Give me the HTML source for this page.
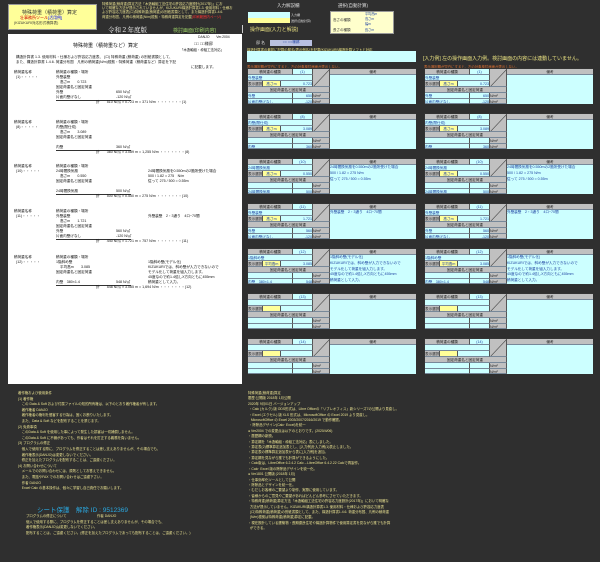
<!DOCTYPE html>
<html><head><meta charset="utf-8">
<style>
*{margin:0;padding:0;box-sizing:border-box}
body{width:600px;height:562px;background:#2f2f2f;position:relative;overflow:hidden;font-family:"Liberation Sans","Noto Sans CJK JP",sans-serif;}
.a{position:absolute;white-space:nowrap}
.t{font-size:4px;line-height:4.6px}
.c{background:#ccffff}
.g{background:#c0c0c0}
.y{background:#ffff99}
.blk{position:absolute;width:169px;height:36px;background:#ccffff;border:1px solid #333}
.blk div{position:absolute;font-size:3.6px;line-height:6px;color:#1b3fa0;white-space:nowrap;overflow:hidden;border-right:1px solid #555;border-bottom:1px solid #789}
.paper{position:absolute;left:8px;top:34px;width:234px;height:350px;background:#fff}
.paper .a{font-size:4px;line-height:4.5px;color:#111}
.yt{color:#e8e090}
</style></head><body>

<div class="a y" style="left:8px;top:4px;width:89px;height:26px;border:1px solid #999;"></div>
<div class="a" style="left:22px;top:9px;font-size:5px;color:#333">特殊荷重（積荷重）算定</div>
<div class="a" style="left:20px;top:15px;font-size:4px;color:#c00">壮事務所ツール<span style="color:#00f">[活用例]</span></div>
<div class="a" style="left:14px;top:21px;font-size:3.6px;color:#333">(KIZUKURI対応形式積算表)</div>

<div class="a t yt" style="left:102px;top:2px;font-size:3.4px;line-height:4.2px">特殊荷重(積荷重)算定方法「木造軸組工法住宅の許容応力度設計(2017年)」にお<br>いて明確な方法が提示されていませんが、KIZUKURI構造計算書1.3. 使用材料・仕様お<br>よび許容応力度表(ロ)特殊荷重(積荷重)の別紙書類として、また構造計算書1.4.6.<br>荷重分布図、凡例の積荷重(N/m)根拠・特殊荷重算定を記載<span style="color:#f33">(印刷範囲内ページ)</span></div>
<div class="a" style="left:108px;top:25px;font-size:6.5px;color:#fff;font-family:'Liberation Serif','Noto Serif CJK SC',serif">令和２年度版</div>
<div class="a" style="left:173px;top:27px;font-size:5px;color:#9c6">検討画面(印刷内容)</div>
<div class="a" style="left:242px;top:25px;width:1px;height:8px;background:#ccc"></div>

<div class="a" style="left:277px;top:3px;font-size:4.5px;color:#ddd">入力解説欄</div>
<div class="a c" style="left:248px;top:12px;width:42px;height:6px"></div>
<div class="a y" style="left:248px;top:18px;width:42px;height:5px"></div>
<div class="a" style="left:291px;top:12px;font-size:3px;color:#ddd;line-height:6px">入力欄<br>選択(自動計算)</div>
<div class="a" style="left:250px;top:26px;font-size:5px;color:#e8e080">操作画面(入力と解説)</div>
<div class="a" style="left:338px;top:3px;font-size:4.5px;color:#ddd">選択(自動計算)</div>
<div class="a" style="left:330px;top:11px;width:64px;height:23px;background:#ffffcc;border:1px solid #999"></div>
<div class="a" style="left:333px;top:15px;font-size:3.5px;color:#333;line-height:10px">高さの種類<br>長さの種類</div>
<div class="a" style="left:365px;top:12px;font-size:3.2px;color:#1b3fa0;line-height:5.2px">平均高m<br>高さm<br>幅m<br>長さm</div>

<div class="a" style="left:256px;top:40px;font-size:4px;color:#ddd">邸 名</div>
<div class="a" style="left:270px;top:40px;width:42px;height:6px;background:#b8c0e0;font-size:3.6px;color:#1b3fa0;text-align:center">○○ ○○様邸</div>
<div class="a" style="left:247px;top:47px;font-size:3.4px;color:#e8e080">構造計算書の最初に記載の邸名(表示例名)を記載(KIZUKURI)構造計算ソフトと対応</div>
<div class="a c" style="left:247px;top:51px;width:169px;height:11px"></div>
<div class="a" style="left:423px;top:55px;font-size:5px;color:#e8e080">[入力例] 左の操作画面入力例。検討画面の内容には連動していません。</div>
<div class="a" style="left:247px;top:64px;font-size:3.4px;color:#e07030">表示選択欄が空白にすると、左の対象検討画面が表示しない。</div>
<div class="a" style="left:424px;top:64px;font-size:3.4px;color:#e07030">表示選択欄が空白にすると、左の対象検討画面が表示しない。</div>

<div class="paper" id="paper"></div>
<div id="blocks"></div>

<div class="a t yt" style="left:18px;top:391px;font-size:3.4px;line-height:5.6px">著作権および使用条件<br>(1) 著作権<br>&nbsp;&nbsp;&nbsp;&nbsp;この Data &amp; Soft および付属ファイルの知的所有権は、以下のとおり著作権者が有します。<br>&nbsp;&nbsp;&nbsp;&nbsp;著作権者 DANJO<br>&nbsp;&nbsp;&nbsp;&nbsp;著作権者の権利を侵害する行為は、固くお断りいたします。<br>&nbsp;&nbsp;&nbsp;&nbsp;また、Data &amp; Soft などを配布することを禁じます。<br>(2) 免責事項<br>&nbsp;&nbsp;&nbsp;&nbsp;このData &amp; Soft を使用した事によって発生した損害は一切補償しません。<br>&nbsp;&nbsp;&nbsp;&nbsp;このData &amp; Soft に不備があっても、作者はそれを訂正する義務を負いません。<br>(3) プログラムの修正<br>&nbsp;&nbsp;&nbsp;&nbsp;個人で使用する際に、プログラムを修正することは差し支えありませんが、その場合でも、<br>&nbsp;&nbsp;&nbsp;&nbsp;著作権表示(DANJO)は変更しないでください。<br>&nbsp;&nbsp;&nbsp;&nbsp;修正を加えたプログラムを配布することは、ご遠慮ください。<br>(4) お問い合わせについて<br>&nbsp;&nbsp;&nbsp;&nbsp;メールでのお問い合わせには、原則としてお答えできません。<br>&nbsp;&nbsp;&nbsp;&nbsp;また、電話やFAX でのお問い合わせはご遠慮下さい。<br>&nbsp;&nbsp;&nbsp;&nbsp;作者 DANJO<br>&nbsp;&nbsp;&nbsp;&nbsp;Excel·Calc の基本操作は、個々に学習し自己責任でお願いします。</div>
<div class="a" style="left:37px;top:504px;font-size:6.5px;color:#2aa8e0">シート保護　解除 ID : 9512369</div>
<div class="a t yt" style="left:26px;top:514px;font-size:3.4px;line-height:5.6px">プログラムの修正について　　　　　　　　　作者 DANJO<br>個人で使用する際に、プログラムを修正することは差し支えありませんが、その場合でも、<br>著作権表示(DANJO)は変更しないでください。<br>配布することは、ご遠慮ください。(修正を加えたプログラムであっても配布することは、ご遠慮ください。)</div>

<div class="a t yt" style="left:248px;top:391px;font-size:3.4px;line-height:5.4px">特殊荷重(積荷重)算定<br>履歴:公開版 2018年 1月公開<br>2020年 9月01日 バージョンアップ<br>&nbsp;・Calc (カルク) 版 ODS形式は、Libre Officeの「リブレオフィス」新シリーズ7の公開より見直し。<br>&nbsp;・Excel (エクセル) 版 XLS 形式は、MicrosoftOffice の Excel 2019 より見直し。<br>&nbsp;&nbsp;&nbsp;MicrosoftOffice の Excel 2003/2007/2016/2019 で動作確認。<br>&nbsp;・除除品デザイン(Calc· Excel)を統一<br>● Ver2004 での変更点は以下のとおりです。(2020/4/06)<br>・履歴欄の新設。<br>・算定欄を「木造軸組・枠組工法対応」表にしました。<br>・算定表(2)標準算定追加表とし、[入力例]を入力例(1)表止しました。<br>・算定表の標準算定追加表から表に[入力例]を追加。<br>・算定欄を見ながら誰でも計算ができるようにした。<br>・Calc版は、LibreOffice 6.2.4.2 Calc→LibreOffice 6.4.2.22 Calcで再製作。<br>・Calc· Excel 版の除除品デザインを統一化。<br>● Ver1801 公開版 (2018年 1月)<br>・仕事効率化ツールとして公開<br>・除除品とデザインを統一化。<br>・むだしお客様のご要望より制作、実際に使用しています。<br>・皆様からのご意見やご要望があればどんどん参考にさせていただきます。<br>・特殊荷重(積荷重)算定方法「木造軸組工法住宅の許容応力度設計(2017年)」において明確な<br>&nbsp;&nbsp;方法が提示していません。KIZUKURI構造計算書1.3. 使用材料・仕様および許容応力度表<br>&nbsp;&nbsp;(ロ)特殊荷重(積荷重)の別紙書類として、また、構造計算書1.4.6. 荷重分布図、凡例の積荷重<br>&nbsp;&nbsp;(N/m)根拠は特殊荷重(積荷重)算定に記載。<br>・現在設計している建築物・長期優良住宅や構造計算物件で使用算定書を見ながら誰でも計算<br>&nbsp;&nbsp;ができる。</div>

<script>
var P=document.getElementById('paper'),h='';
function t(x,y,s,st){h+='<div class="a" style="left:'+x+'px;top:'+y+'px;'+(st||'')+'">'+s+'</div>';}
t(190,1,'DANJO　　Ver.2004','font-size:3.4px');
t(65,10,'特殊荷重（積荷重など）算定','font-size:5px');
t(186,8,'□□ □□様邸','font-size:4px');
t(172,14,'「木造軸組・枠組工法対応」','font-size:3.4px');
t(8,21,'構造計算書 1.3. 使用材料・仕様および許容応力度表、 (ロ) 特殊荷重 (積荷重) の別紙書類として、<br>また、構造計算書 1.4.6. 荷重分布図　凡例の積荷重(N/m)根拠・特殊荷重（積荷重など）算定を下記<br><span style="margin-left:175px">に記載します。</span>','font-size:3.6px;line-height:5px');
var secs=[
[36,'(1)','外壁装壁','高さm　　0.723',[['外壁','650 N/㎡'],['片面内壁げなし','-120 N/㎡']],'510 N/㎡ × 0.723 m = 371 N/m ・・・・・・・(1)',''],
[86,'(8)','内壁(間仕切)','高さm　　3.089',[['',''],['内壁','360 N/㎡']],'360 N/㎡ × 3.089 m = 1,255 N/m ・・・・・・・(8)',''],
[130,'(10)','24時間換気扇','高さm　　0.550',[['',''],['24時間換気扇','500 N/㎡']],'500 N/㎡ × 0.550 m = 275 N/m ・・・・・・・(10)','24時間換気扇を0.550mの2箇所受けた場合<br>500 / 1.82 = 275　N/m<br>従って 275 / 500 = 0.55m'],
[175,'(11)','外壁装壁','高さm　　1.721',[['外壁','560 N/㎡'],['片面内壁げなし','-120 N/㎡']],'440 N/㎡ × 1.721 m = 757 N/m ・・・・・・・(11)','外壁装壁　2・3通り　4ロ~70間'],
[221,'(12)','1階斜め壁','平均高m　　3.085',[['',''],['内壁　380×1.4','548 N/㎡']],'548 N/㎡ × 3.085 m = 1,694 N/m ・・・・・・・(12)','1階斜め壁(モデル化)<br>KIZUKURIでは、斜め壁が入力できないので<br>モデル化して荷重を組入力します。<br>45度なので約1.4倍しX方向ともに455mm<br>積荷重として入力。']];
secs.forEach(function(s){var y=s[0];
t(6,y,'積荷重名称','font-size:3.6px');t(48,y,'積荷重の種類・場所','font-size:3.6px');
t(8,y+5,s[1]+'・・・・・',' font-size:3.6px');t(48,y+5,s[2],'font-size:3.6px');
t(52,y+10,s[3],'font-size:3.6px');t(48,y+15,'固定荷重名と固定荷重','font-size:3.6px');
t(48,y+20,s[4][0][0],'font-size:3.6px');t(108,y+20,s[4][0][1],'font-size:3.6px');
t(48,y+25,s[4][1][0],'font-size:3.6px;width:75px;border-bottom:0.6px solid #333');t(108,y+25,s[4][1][1],'font-size:3.6px');
t(88,y+30,'計　　'+s[5],'font-size:3.6px');
if(s[6])t(140,y+5,s[6],'font-size:3.6px;line-height:5px');});
P.innerHTML=h;

var B=document.getElementById('blocks'),o='';
var data=[['(1)','外壁装壁','高さm','0.723',[['外壁','650'],['片面内壁げなし','-120']],''],
['(8)','内壁(間仕切)','高さm','3.089',[['',''],['内壁','360']],''],
['(10)','24時間換気扇','高さm','0.550',[['',''],['24時間換気扇','500']],'24時間換気扇を0.550mの2箇所受けた場合<br>500 / 1.82 = 275 N/m<br>従って 275 / 500 = 0.55m'],
['(11)','外壁装壁','高さm','1.721',[['外壁','560'],['片面内壁げなし','-120']],'外壁装壁　2・3通り　4ロ~70間'],
['(12)','1階斜め壁','平均高m','3.085',[['',''],['内壁　380×1.4','548']],'1階斜め壁(モデル化)<br>KIZUKURIでは、斜め壁が入力できないので<br>モデル化して荷重を組入力します。<br>45度なので約1.4倍しX方向ともに455mm<br>積荷重として入力。'],
['(13)','','','',[['',''],['','']],''],
['(14)','','','',[['',''],['','']],'']];
function d(x,y,w,h,cls,txt,st){o+='<div class="'+cls+'" style="left:'+x+'px;top:'+y+'px;width:'+w+'px;height:'+h+'px;'+(st||'')+'">'+txt+'</div>';}
[247,424].forEach(function(X){
data.forEach(function(r,i){var Y=68+i*45;
o+='<div class="blk" style="left:'+X+'px;top:'+Y+'px">';
d(0,0,45,6,'g','積荷重の種類','text-align:center;color:#222');
d(45,0,20,6,'c',r[0],'text-align:center');
d(65,0,17,18,'g','<svg width="17" height="18" style="position:absolute;left:0;top:0"><line x1="0" y1="18" x2="17" y2="0" stroke="#444" stroke-width="0.6"/></svg>');
d(82,0,86,6,'g','備考','text-align:center;color:#222;border-right:0');
d(0,6,65,6,'c',r[1]);
d(0,12,15,6,'g','表示選択','color:#222');
d(15,12,18,6,'y',r[2],'text-align:center');
d(33,12,32,6,'c',r[3],'text-align:right');
d(0,18,82,6,'g','<span style="margin-left:22px;color:#222">固定荷重名と固定荷重</span>');
d(0,24,45,6,'c',r[4][0][0]);d(45,24,20,6,'c',r[4][0][1],'text-align:right');d(65,24,17,6,'g','N/m²','color:#222');
d(0,30,45,5,'c',r[4][1][0]);d(45,30,20,5,'c',r[4][1][1],'text-align:right');d(65,30,17,5,'g','N/m²','color:#222');
d(82,6,86,29,'c',r[5],'line-height:5.8px;border-right:0;border-bottom:0');
o+='</div>';});});
B.innerHTML=o;
</script>
</body></html>
